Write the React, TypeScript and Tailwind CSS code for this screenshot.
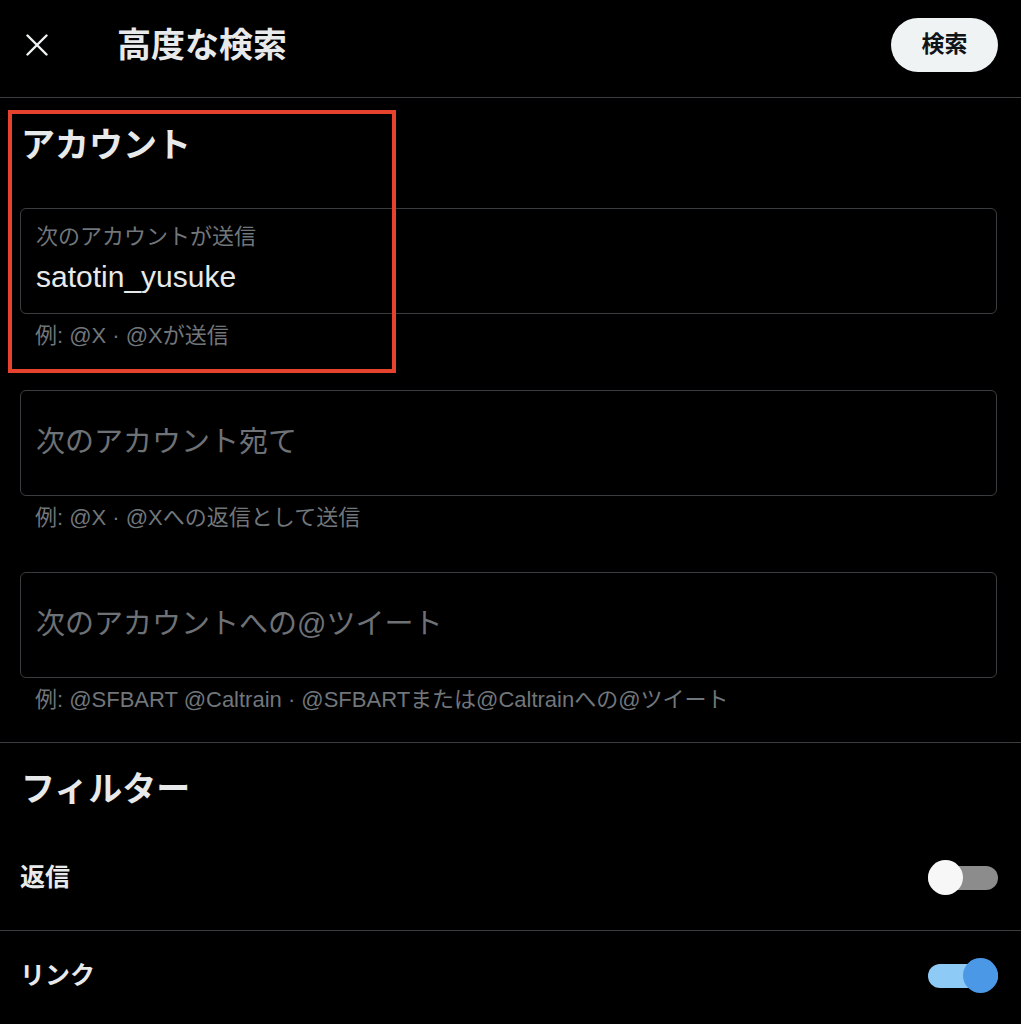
const font = {
  fontFamily: '"Liberation Sans", "Noto Sans CJK JP", sans-serif',
};

function Field({
  label,
  value,
  placeholder,
  hint,
}: {
  label?: string;
  value?: string;
  placeholder?: string;
  hint: string;
}) {
  return (
    <div>
      <div className="h-[106px] rounded-[6px] border border-[#3a3d40] px-[15px]">
        {label ? (
          <div className="pt-[14px]">
            <div className="text-[22px] leading-[28px] text-[#71767b]">{label}</div>
            <div className="mt-[9px] text-[30px] leading-[34px] text-[#e7e9ea]">{value}</div>
          </div>
        ) : (
          <div className="flex h-full items-center text-[29px] text-[#6e7276]">{placeholder}</div>
        )}
      </div>
      <div className="mt-[8px] pl-[15px] text-[22px] leading-[28px] text-[#71767b]">{hint}</div>
    </div>
  );
}

function Toggle({ on }: { on: boolean }) {
  return (
    <div className="relative h-[36px] w-[70px]">
      <div
        className={`absolute left-0 right-0 top-[6px] h-[24px] rounded-full ${
          on ? "bg-[#8ecaf6]" : "bg-[#8c8c8c]"
        }`}
      />
      <div
        className={`absolute top-0 h-[35px] w-[35px] rounded-full ${
          on ? "right-0 bg-[#4b98e6]" : "left-0 bg-[#f7f7f7]"
        }`}
      />
    </div>
  );
}

export default function App() {
  return (
    <div className="relative h-[1024px] w-[1021px] overflow-hidden bg-black text-[#e7e9ea]" style={font}>
      {/* header */}
      <div className="flex h-[98px] items-center border-b border-[#3a3d40] pb-[8px] pl-[26px] pr-[23px]">
        <svg width="22" height="22" viewBox="0 0 22 22" className="text-[#eff3f4]">
          <path d="M1.5 1.5 L20.5 20.5 M20.5 1.5 L1.5 20.5" stroke="currentColor" strokeWidth="2.4" strokeLinecap="round" />
        </svg>
        <h1 className="ml-[69px] text-[34px] font-bold leading-none text-[#e7e9ea]">高度な検索</h1>
        <button className="ml-auto h-[54px] w-[107px] rounded-full bg-[#eff3f4] text-[23px] font-bold text-[#0f1419]">
          検索
        </button>
      </div>

      {/* account section */}
      <div className="pl-[20px] pr-[24px]">
        <h2 className="mt-[24px] pl-[1px] text-[34px] font-bold leading-[46px]">アカウント</h2>
        <div className="mt-[40px] flex flex-col gap-[40px]">
          <Field label="次のアカウントが送信" value="satotin_yusuke" hint="例: @X · @Xが送信" />
          <Field placeholder="次のアカウント宛て" hint="例: @X · @Xへの返信として送信" />
          <Field
            placeholder="次のアカウントへの@ツイート"
            hint="例: @SFBART @Caltrain · @SFBARTまたは@Caltrainへの@ツイート"
          />
        </div>
      </div>

      <div className="mt-[28px] border-t border-[#3a3d40]" />

      {/* filter section */}
      <div className="pl-[20px] pr-[23px]">
        <h2 className="mt-[23px] pl-[1px] text-[34px] font-bold leading-[46px]">フィルター</h2>
        <div className="flex h-[118px] items-center justify-between pt-[14px]">
          <span className="text-[25px] font-bold">返信</span>
          <Toggle on={false} />
        </div>
      </div>
      <div className="border-t border-[#3a3d40]" />
      <div className="flex h-[90px] items-center justify-between pl-[20px] pr-[23px]">
        <span className="text-[25px] font-bold">リンク</span>
        <Toggle on={true} />
      </div>

      {/* annotation box */}
      <div className="absolute left-[8px] top-[110px] h-[263px] w-[388px] border-[4px] border-[#e5432d]" />
    </div>
  );
}
